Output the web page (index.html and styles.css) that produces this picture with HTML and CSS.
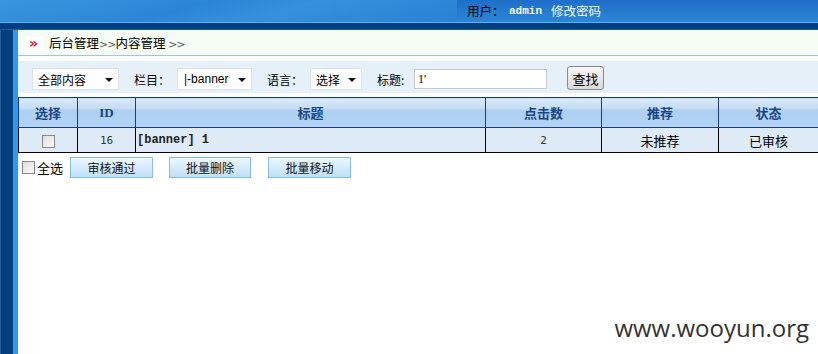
FILE: index.html
```html
<!DOCTYPE html>
<html>
<head>
<meta charset="utf-8">
<link rel="stylesheet" href="styles.css">
</head>
<body>
<div class="top">
  <div class="top-wave"></div>
  <div class="top-user">
    <span class="u-label">用户：</span><span class="u-name">admin</span><span class="u-pass">修改密码</span>
  </div>
</div>
<div class="navline"></div>
<div class="main">
  <div class="side"></div>
  <div class="content">
    <div class="crumb">
      <span class="crumb-icon">»</span>
      <span class="crumb-text">后台管理<span class="gt">&gt;&gt;</span>内容管理 <span class="gt">&gt;&gt;</span></span>
    </div>
    <div class="toolbar">
      <div class="sel sel1"><span>全部内容</span><i class="arrow"></i></div>
      <span class="lbl lbl1">栏目：</span>
      <div class="sel sel2"><span>|-banner</span><i class="arrow"></i></div>
      <span class="lbl lbl1">语言：</span>
      <div class="sel sel3"><span>选择</span><i class="arrow"></i></div>
      <span class="lbl lbl2">标题:</span>
      <div class="inp"><span class="inp-val">1'</span></div>
      <button class="find">查找</button>
    </div>
    <table class="grid">
      <colgroup>
        <col class="c1"><col class="c2"><col class="c3"><col class="c4"><col class="c5"><col>
      </colgroup>
      <thead>
        <tr>
          <th>选择</th><th class="idh">ID</th><th>标题</th><th>点击数</th><th>推荐</th><th>状态</th>
        </tr>
      </thead>
      <tbody>
        <tr>
          <td><span class="cb"></span></td>
          <td class="num">16</td>
          <td class="title">[banner] 1</td>
          <td class="num">2</td>
          <td>未推荐</td>
          <td>已审核</td>
        </tr>
      </tbody>
    </table>
    <div class="actions">
      <span class="cb cb-all"></span><span class="all">全选</span>
      <button class="act a1">审核通过</button>
      <button class="act a2">批量删除</button>
      <button class="act a3">批量移动</button>
    </div>
    <div class="mark">www.wooyun.org</div>
  </div>
</div>
</body>
</html>
```

FILE: styles.css
```css
* { box-sizing: border-box; }
html, body { margin: 0; padding: 0; }
body {
  width: 818px;
  height: 354px;
  overflow: hidden;
  background: #fff;
  font-family: "Noto Sans CJK SC", "DejaVu Sans", sans-serif;
  font-size: 12px;
  color: #000;
}
.top {
  height: 23px;
  position: relative;
  background: linear-gradient(to bottom, #1f6ec9 0%, #2a86d6 100%);
  border-bottom: 1px solid #5db0f0;
  display: flex;
  justify-content: flex-end;
}
.top-wave {
  position: absolute;
  left: 0; top: 0; bottom: 0;
  width: 457px;
  background: linear-gradient(165deg, #3a95de 0%, #2c86d6 40%, #3690dc 60%, #2a82d3 100%);
}
.top-user {
  position: relative;
  width: 361px;
  height: 22px;
  display: flex;
  align-items: center;
  padding-left: 10px;
  line-height: 14px;
  font-size: 12.5px;
}
.u-label { color: #000; width: 42px; }
.u-name {
  color: #f4f8ff;
  font-family: "Liberation Mono", monospace;
  font-weight: bold;
  font-size: 11px;
  width: 42px;
}
.u-pass { color: #f4f8ff; }
.navline {
  height: 7px;
  background: #003e7e;
  border-bottom: 1px solid #1b5da0;
}
.main { display: flex; height: 324px; }
.side {
  width: 18px;
  flex: none;
  background: #003f80;
  border-left: 1px solid #2b5f98;
  border-right: 5px solid #3399e6;
}
.content { flex: 1; position: relative; }
.crumb {
  height: 26px;
  background: #f5fcf3;
  border-bottom: 1px solid #a9c1de;
  display: flex;
  align-items: center;
  padding-left: 6px;
}
.crumb-icon {
  width: 20px;
  height: 15px;
  background: #fff;
  color: #e0102a;
  font-family: "DejaVu Sans", sans-serif;
  font-weight: bold;
  font-size: 14px;
  line-height: 15px;
  padding-left: 5px;
  margin-top: 1px;
}
.crumb-text { margin-left: 5px; font-size: 12.5px; line-height: 14px; margin-top: 2px; }
.gt { color: #555; font-family: "DejaVu Sans", sans-serif; font-size: 11px; letter-spacing: -1px; }
.toolbar {
  margin-top: 5px;
  height: 32px;
  background: #e6f0f8;
  display: flex;
  align-items: center;
  padding-left: 14px;
  padding-top: 4px;
}
.sel {
  height: 22px;
  background: #fff;
  border: 1px solid #dbe3ea;
  display: flex;
  align-items: center;
  padding-left: 5px;
  position: relative;
  font-size: 12px;
}
.sel1 { width: 87px; }
.sel2 { width: 75px; padding-left: 6px; font-family: "Liberation Sans", sans-serif; font-size: 12px; }
.sel3 { width: 52px; }
.arrow {
  position: absolute;
  right: 5px;
  top: 9px;
  border-left: 4px solid transparent;
  border-right: 4px solid transparent;
  border-top: 4px solid #111;
}
.lbl { margin-left: 15px; }
.lbl1 { width: 43px; }
.lbl2 { width: 37px; }
.inp {
  width: 133px;
  height: 20px;
  background: #fff;
  border: 1px solid #c6ccd2;
  display: flex;
  align-items: center;
  padding-left: 3px;
}
.inp-val { font-family: "Liberation Serif", serif; font-size: 12px; }
.find {
  margin-left: 20px;
  width: 37px;
  height: 24px;
  padding: 0;
  border: 1px solid #8a8a8a;
  border-radius: 3px;
  background: linear-gradient(to bottom, #f6f6f6, #dadada);
  font-family: "Noto Sans CJK SC", sans-serif;
  font-size: 13px;
  margin-top: -2px;
}
.grid {
  margin-top: 4px;
  width: 801px;
  border-collapse: collapse;
  table-layout: fixed;
}
.c1 { width: 59px; }
.c2 { width: 58px; }
.c3 { width: 350px; }
.c4 { width: 116px; }
.c5 { width: 117px; }
.grid th {
  height: 30px;
  border: 1px solid #1d3d72;
  background: linear-gradient(to bottom, #d9e8f7 0%, #c4dcf3 35%, #add0f2 40%, #b2d3f2 100%);
  color: #1a4685;
  font-weight: bold;
  font-size: 13px;
  text-align: center;
  padding: 0;
}
.grid th.idh { font-family: "Liberation Serif", serif; font-size: 13px; }
.grid td {
  height: 25px;
  border: 1px solid #000;
  border-top: none;
  background: #deebf7;
  text-align: center;
  padding: 0;
  font-size: 13px;
}
.grid td.num { font-family: "DejaVu Sans Mono", monospace; font-size: 11px; color: #333; }
.grid td.title {
  text-align: left;
  padding-left: 1px;
  font-family: "Liberation Mono", monospace;
  font-weight: bold;
  font-size: 12px;
  color: #222;
}
.cb {
  display: inline-block;
  width: 13px;
  height: 13px;
  border: 1px solid #8a8a8a;
  background: linear-gradient(135deg, #dcdcdc, #fdfdfd);
  vertical-align: middle;
}
.actions {
  display: flex;
  align-items: center;
  padding-left: 4px;
  height: 24px;
  margin-top: 2px;
}
.cb-all { flex: none; }
.all { margin-left: 2px; font-size: 13px; width: 33px; }
.act {
  width: 83px;
  height: 21px;
  padding: 0;
  border: 1px solid #86bde6;
  background: linear-gradient(to bottom, #eef7fe 0%, #d5ebfb 50%, #bfe0f7 100%);
  font-family: "Noto Sans CJK SC", sans-serif;
  font-size: 12px;
  color: #111;
}
.a2 { margin-left: 16px; width: 82px; }
.a3 { margin-left: 17px; }
.mark {
  position: absolute;
  right: 10px;
  bottom: 10px;
  font-family: "Open Sans", sans-serif;
  font-size: 24px;
  color: #333;
}
```
